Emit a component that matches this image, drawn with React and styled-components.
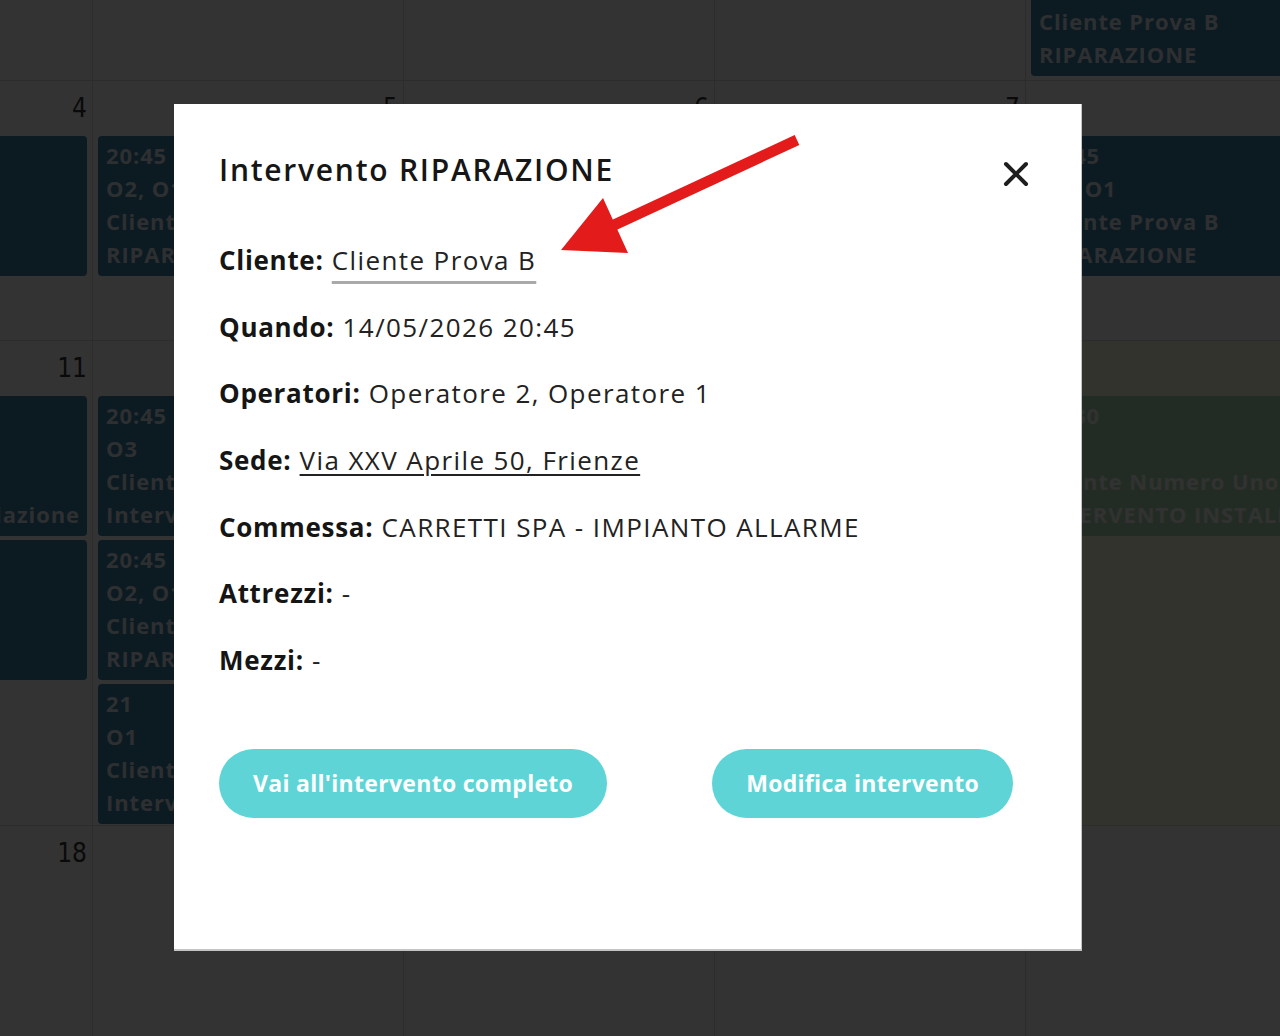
import React from 'react';
import styled, { createGlobalStyle } from 'styled-components';

const GlobalStyle = createGlobalStyle`
  html, body {
    margin: 0;
    padding: 0;
    background: #fff;
    overflow: hidden;
  }
  body {
    font-family: "Open Sans", "Noto Sans", sans-serif;
  }
`;

const Page = styled.div`
  position: relative;
  width: 1280px;
  height: 1036px;
  overflow: hidden;
  background: #fff;
`;

// the month grid, scrolled so only part of it is visible
const Calendar = styled.div`
  display: grid;
  grid-template-columns: repeat(5, 311px);
  grid-template-rows: 200px 260px 485px 260px;
  margin-left: -218px;
  margin-top: -119px;
`;

const DayCell = styled.div`
  border-right: 1px solid #dddddd;
  border-bottom: 1px solid #dddddd;
  background: ${({ today }) => (today ? '#ffffe0' : '#fff')};
  display: flex;
  flex-direction: column;
  min-width: 0;
`;

const DayNumber = styled.div`
  height: 55px;
  line-height: 54px;
  padding-right: 5px;
  text-align: right;
  font-family: "DejaVu Sans", sans-serif;
  font-stretch: condensed;
  font-size: 26px;
  color: #333;
`;

const EventList = styled.div`
  display: flex;
  flex-direction: column;
  gap: 4px;
  padding: 0 5px;
`;

const EventBox = styled.div`
  height: 140px;
  box-sizing: border-box;
  padding: 3px 8px;
  border-radius: 4px;
  background: ${({ kind }) => (kind === 'green' ? '#afdcb4' : '#3c82aa')};
  color: rgba(255, 255, 255, 0.85);
  font-weight: 700;
  font-size: 22px;
  letter-spacing: 0.9px;
  line-height: 33px;
  white-space: nowrap;
  overflow: hidden;
`;

const EventLine = styled.div`
  height: 33px;
`;

const Backdrop = styled.div`
  position: absolute;
  inset: 0;
  background: rgba(0, 0, 0, 0.8);
  display: flex;
  justify-content: center;
  align-items: flex-start;
  padding: 104px 24px 0 0;
  box-sizing: border-box;
`;

const Modal = styled.div`
  width: 908px;
  height: 847px;
  box-sizing: border-box;
  background: #fff;
  padding: 42px 45px 0 45px;
  box-shadow: inset -1px -2px 0 #c4c4c4;
  color: #1c1c1c;
`;

const ModalHeader = styled.div`
  display: flex;
  justify-content: space-between;
  align-items: flex-start;
  height: 44px;
`;

const Title = styled.h2`
  margin: 0;
  font-size: 30px;
  line-height: 48px;
  font-weight: 600;
  letter-spacing: 1.75px;
  color: #161616;
`;

const CloseButton = styled.button`
  border: none;
  background: none;
  padding: 0;
  margin: 15px 8px 0 0;
  width: 26px;
  height: 26px;
  cursor: pointer;
  display: flex;
`;

const DetailList = styled.div`
  display: flex;
  flex-direction: column;
  gap: 30.67px;
  margin-top: 52px;
`;

const DetailRow = styled.div`
  font-size: 26px;
  line-height: 36px;
  letter-spacing: 1.4px;
  color: #222;
`;

const Label = styled.span`
  font-weight: 700;
  letter-spacing: 0.7px;
  color: #151515;
`;

const ClientValue = styled.span`
  text-decoration: underline;
  text-decoration-color: #a9a9a9;
  text-decoration-thickness: 3px;
  text-underline-offset: 11px;
`;

const AddressLink = styled.a`
  color: #222;
  text-decoration: underline;
  text-underline-offset: 4px;
  text-decoration-thickness: 1.5px;
`;

const ButtonRow = styled.div`
  display: flex;
  gap: 105px;
  margin-top: 71px;
`;

const ActionButton = styled.button`
  height: 69px;
  padding: 0 34px;
  border: none;
  border-radius: 35px;
  background: #5fd4d6;
  color: #fff;
  font-family: "Open Sans", "Noto Sans", sans-serif;
  font-size: 23px;
  font-weight: 700;
  letter-spacing: 0.3px;
  cursor: pointer;
`;

const Annotation = styled.svg`
  position: absolute;
  left: 0;
  top: 0;
  pointer-events: none;
`;

const ev = (time, ops, client, type, kind) => ({ lines: [time, ops, client, type], kind });

const weeks = [
  { days: [
    { n: 27, events: [] },
    { n: 28, events: [] },
    { n: 29, events: [] },
    { n: 30, events: [] },
    { n: 1, events: [ev('20:45', 'O2, O1', 'Cliente Prova B', 'RIPARAZIONE')] },
  ] },
  { days: [
    { n: 4, events: [ev('21', 'O1', 'Cliente', 'Intervento')] },
    { n: 5, events: [ev('20:45', 'O2, O1', 'Cliente Prova B', 'RIPARAZIONE')] },
    { n: 6, events: [] },
    { n: 7, events: [] },
    { n: 8, events: [ev('20:45', 'O2, O1', 'Cliente Prova B', 'RIPARAZIONE')] },
  ] },
  { days: [
    { n: 11, events: [ev('20:45', 'O3', 'Cliente A', 'Intervento installazione'), ev('21', 'O1', 'Cliente', 'Prova')] },
    { n: 12, events: [
      ev('20:45', 'O3', 'Cliente Numero Uno', 'Intervento installazione'),
      ev('20:45', 'O2, O1', 'Cliente Prova B', 'RIPARAZIONE'),
      ev('21', 'O1', 'Cliente Numero Uno', 'Intervento installazione'),
    ] },
    { n: 13, events: [] },
    { n: 14, events: [ev('20:45', 'O2, O1', 'Cliente Prova B', 'RIPARAZIONE')] },
    { n: 15, today: true, events: [ev('20:30', '', 'Cliente Numero Uno', 'INTERVENTO INSTALLAZIONE', 'green')] },
  ] },
  { days: [
    { n: 18, events: [] },
    { n: 19, events: [] },
    { n: 20, events: [] },
    { n: 21, events: [] },
    { n: 22, events: [] },
  ] },
];

const CloseIcon = () => (
  <svg width="26" height="26" viewBox="0 0 26 26">
    <path d="M3 3 L23 23 M23 3 L3 23" stroke="#1e1e1e" strokeWidth="4" strokeLinecap="round" />
  </svg>
);

export default function App() {
  return (
    <Page>
      <GlobalStyle />
      <Calendar>
        {weeks.map((week, wi) =>
          week.days.map((day, di) => (
            <DayCell key={`${wi}-${di}`} today={day.today}>
              <DayNumber>{day.n}</DayNumber>
              <EventList>
                {day.events.map((e, i) => (
                  <EventBox key={i} kind={e.kind}>
                    {e.lines.map((l, li) => (
                      <EventLine key={li}>{l}</EventLine>
                    ))}
                  </EventBox>
                ))}
              </EventList>
            </DayCell>
          ))
        )}
      </Calendar>

      <Backdrop>
        <Modal>
          <ModalHeader>
            <Title>Intervento RIPARAZIONE</Title>
            <CloseButton aria-label="Chiudi">
              <CloseIcon />
            </CloseButton>
          </ModalHeader>
          <DetailList>
            <DetailRow>
              <Label>Cliente:</Label> <ClientValue>Cliente Prova B</ClientValue>
            </DetailRow>
            <DetailRow>
              <Label>Quando:</Label> 14/05/2026 20:45
            </DetailRow>
            <DetailRow>
              <Label>Operatori:</Label> Operatore 2, Operatore 1
            </DetailRow>
            <DetailRow>
              <Label>Sede:</Label> <AddressLink href="#">Via XXV Aprile 50, Frienze</AddressLink>
            </DetailRow>
            <DetailRow>
              <Label>Commessa:</Label> CARRETTI SPA - IMPIANTO ALLARME
            </DetailRow>
            <DetailRow>
              <Label>Attrezzi:</Label> -
            </DetailRow>
            <DetailRow>
              <Label>Mezzi:</Label> -
            </DetailRow>
          </DetailList>
          <ButtonRow>
            <ActionButton>Vai all'intervento completo</ActionButton>
            <ActionButton>Modifica intervento</ActionButton>
          </ButtonRow>
        </Modal>
      </Backdrop>

      <Annotation width="1280" height="1036" viewBox="0 0 1280 1036">
        <line x1="797" y1="140" x2="612" y2="226" stroke="#e31b1b" strokeWidth="11" />
        <polygon points="561,250 603,198 628,253" fill="#e31b1b" />
      </Annotation>
    </Page>
  );
}
